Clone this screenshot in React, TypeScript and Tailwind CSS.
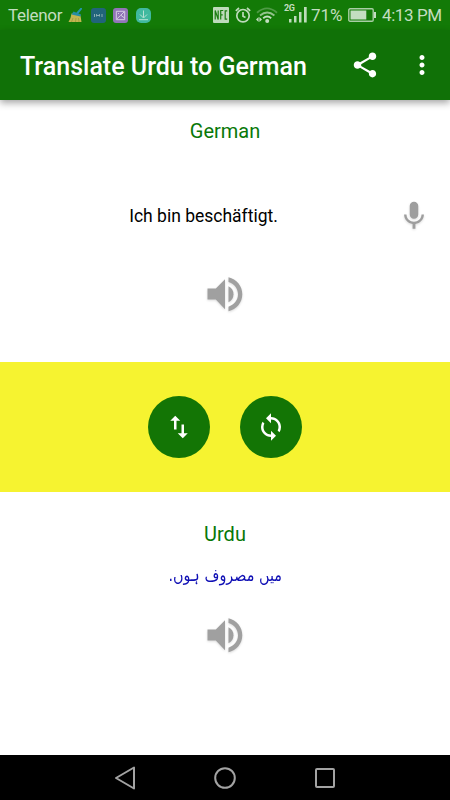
import React from 'react';
import { MdShare, MdMoreVert, MdMic, MdSwapVert, MdLoop } from 'react-icons/md';

function StatusBar() {
  return (
    <div className="h-[30px] shrink-0 bg-[#137a07] flex items-center text-[#c3dec0] text-[17px] whitespace-nowrap">
      <span className="ml-2 w-[54px] shrink-0 leading-[30px] tracking-[-0.3px]">Telenor</span>
      <svg className="ml-1.5 w-[15px] h-[15px] shrink-0" viewBox="0 0 15 15">
        <path d="M13 .8 9.5 5" stroke="#2595ad" strokeWidth="2" strokeLinecap="round" />
        <path d="M3.5 5.5 12.5 7.5 13.5 14H.5L2.5 10z" fill="#c3b650" />
        <path d="m5.5 3.5 7.5 3-.6 2L3.5 6.5z" fill="#268da2" />
        <path d="M5 10 3.5 14M8 10l-.5 4M10.5 10l.5 4" stroke="#94993b" strokeWidth=".7" />
      </svg>
      <svg className="ml-2 w-[15px] h-[15px] shrink-0" viewBox="0 0 15 15">
        <rect width="15" height="15" rx="3" fill="#21647a" />
        <path d="M3.5 6v3M5.5 8.5V6.4L7 8l1.5-1.6v2.1M11 6v3" fill="none" stroke="#a5c1c2" strokeWidth=".8" />
      </svg>
      <svg className="ml-[7px] w-[15px] h-[15px] shrink-0" viewBox="0 0 15 15">
        <rect width="15" height="15" rx="3" fill="#9275b8" />
        <path d="M3.3 3.3h8.4v8.4H3.3zM3.8 11l4-3.8L11.5 10M8 7l3-3M5 5l1 1" fill="none" stroke="#d5cee4" strokeWidth="1" />
      </svg>
      <svg className="ml-2 w-[15px] h-[15px] shrink-0" viewBox="0 0 15 15">
        <rect width="15" height="15" rx="5" fill="#40b99f" />
        <path d="M7.5 2.5v7M4 6.5 7.5 10 11 6.5M3 11.7h9" fill="none" stroke="#b6e2d3" strokeWidth="1" />
      </svg>
      <svg className="ml-[62px] w-4 h-4 shrink-0" viewBox="0 0 16 16">
        <rect width="16" height="16" rx="1" fill="#bedbbb" />
        <path d="M2.2 12.5v-9l3 9v-9M7.7 12.5v-9h2.5M7.7 7.8h2M14.2 3.8h-2v8.4h2" fill="none" stroke="#1c7d12" strokeWidth="1.2" />
      </svg>
      <svg className="ml-[6px] w-4 h-4 shrink-0" viewBox="0 0 16 16" fill="none" stroke="#bedbbb" strokeWidth="1.7">
        <circle cx="8" cy="8.7" r="6.2" />
        <path d="M.8 3.8 4 1M15.2 3.8 12 1M8 5v4.2l2.5 1.3" />
      </svg>
      <svg className="ml-[5px] w-[22px] h-[18px] shrink-0" viewBox="0 0 22 18" fill="none" strokeWidth="1.8">
        <path d="M1 6.8Q11-2 21 6.8" stroke="#4e9b45" />
        <path d="M4 9.5q7.2-6 14.4 0" stroke="#93c38d" />
        <path d="M7.2 12.3q4-3.5 8 0" stroke="#c3dec0" />
        <circle cx="11.2" cy="15" r="2" fill="#c3dec0" stroke="none" />
        <path d="M0 13.5 2.6 11v5zM6 13.5 3.4 11v5z" fill="#c3dec0" stroke="none" />
      </svg>
      <div className="ml-1 relative w-6 h-[30px] shrink-0">
        <span className="absolute left-0.5 top-[3px] text-[9px] leading-[11px] font-bold tracking-[-0.3px]">2G</span>
        <svg className="absolute left-[7px] top-[7px] w-[18px] h-4" viewBox="0 0 18 16" fill="#bedbbb">
          <path d="M0 12h2.5v3.5H0zM5 9h2.5v6.5H5zM10 5h2.5v10.5H10zM15 0h2.7v15.5H15z" />
        </svg>
      </div>
      <span className="ml-[5px] leading-[30px] w-[33px] shrink-0">71%</span>
      <svg className="ml-1 w-7 h-[14px] shrink-0" viewBox="0 0 28 14">
        <rect x=".8" y=".8" width="24.4" height="12.4" rx="1.2" fill="none" stroke="#a9cea5" strokeWidth="1.4" />
        <path d="M2.5 2.5h15.8v9H2.5zM26 4h2v6h-2z" fill="#c3dec0" />
      </svg>
      <span className="ml-[6px] leading-[30px] tracking-[-0.4px]">4:13 PM</span>
    </div>
  );
}

function Speaker() {
  return (
    <svg
      className="w-9 h-[35px] text-[#a0a0a0] drop-shadow-[0_1px_1px_rgba(0,0,0,0.15)]"
      viewBox="0 0 36 35"
      fill="currentColor"
    >
      <path d="M.5 11.5h8.3L18 2.3v30L8.8 22.5H.5z" />
      <path d="M21.5 9.3q5 2.7 5 8t-5 8z" />
      <path d="M21.5.3C29.5 2 35.3 9 35.3 17.3S29.5 32.6 21.5 34.3v-4.6C27 28 31 23.2 31 17.3S27 6.6 21.5 4.9z" />
    </svg>
  );
}

export default function App() {
  return (
    <div className="w-[450px] h-[800px] flex flex-col bg-white overflow-hidden font-[Roboto,sans-serif]">
      <StatusBar />
      <header className="h-[70px] shrink-0 bg-[#107107] text-white flex items-center shadow-[0_3px_7px_rgba(0,0,0,0.35)]">
        <h1 className="ml-5 w-[330px] text-[25px] font-medium leading-[30px] pt-[3px] whitespace-nowrap">Translate Urdu to German</h1>
        <MdShare className="w-[30px] h-[30px]" />
        <MdMoreVert className="ml-[27px] w-[30px] h-[30px]" />
      </header>

      <section className="h-[262px] shrink-0 flex flex-col items-center">
        <h2 className="mt-[19px] text-[20px] leading-6 text-[#087808]">German</h2>
        <div className="mt-[52px] h-[42px] w-full flex items-center">
          <p className="w-[407px] text-center text-[17.5px] text-black">Ich bin beschäftigt.</p>
          <MdMic className="-ml-[10px] w-[34px] h-[34px] text-[#9e9e9e] drop-shadow-[0_1px_1px_rgba(0,0,0,0.15)]" />
        </div>
        <div className="mt-[40px]">
          <Speaker />
        </div>
      </section>

      <section className="h-[130px] shrink-0 bg-[#f6f330] flex justify-center gap-[30px] pt-[34px]">
        <button className="w-[62px] h-[62px] rounded-full bg-[#137505] text-white flex items-center justify-center">
          <MdSwapVert className="w-[30px] h-[30px]" />
        </button>
        <button className="w-[62px] h-[62px] rounded-full bg-[#137505] text-white flex items-center justify-center">
          <MdLoop className="w-[30px] h-[30px]" />
        </button>
      </section>

      <section className="flex-1 flex flex-col items-center">
        <h2 className="mt-[30px] text-[20px] leading-6 text-[#087808]">Urdu</h2>
        <p dir="rtl" lang="ur" className="mt-[17px] h-6 text-[17.5px] leading-6 scale-x-[0.82] text-[#1010b5] font-['DejaVu_Sans',sans-serif]">میں مصروف ہوں.</p>
        <div className="mt-[31px]">
          <Speaker />
        </div>
      </section>

      <nav className="h-[45px] shrink-0 bg-black flex items-center justify-center gap-[78px] text-[#a3a3a3]">
        <svg className="w-[22px] h-6" viewBox="0 0 22 24" fill="none" stroke="currentColor" strokeWidth="2" strokeLinejoin="round">
          <path d="M20 1.5v21L2 12z" />
        </svg>
        <svg className="w-[22px] h-[22px]" viewBox="0 0 22 22" fill="none" stroke="currentColor" strokeWidth="2">
          <circle cx="11" cy="11" r="9.8" />
        </svg>
        <svg className="w-[22px] h-[22px]" viewBox="0 0 22 22" fill="none" stroke="currentColor" strokeWidth="2">
          <rect x="2" y="2" width="18" height="18" rx="1" />
        </svg>
      </nav>
    </div>
  );
}
